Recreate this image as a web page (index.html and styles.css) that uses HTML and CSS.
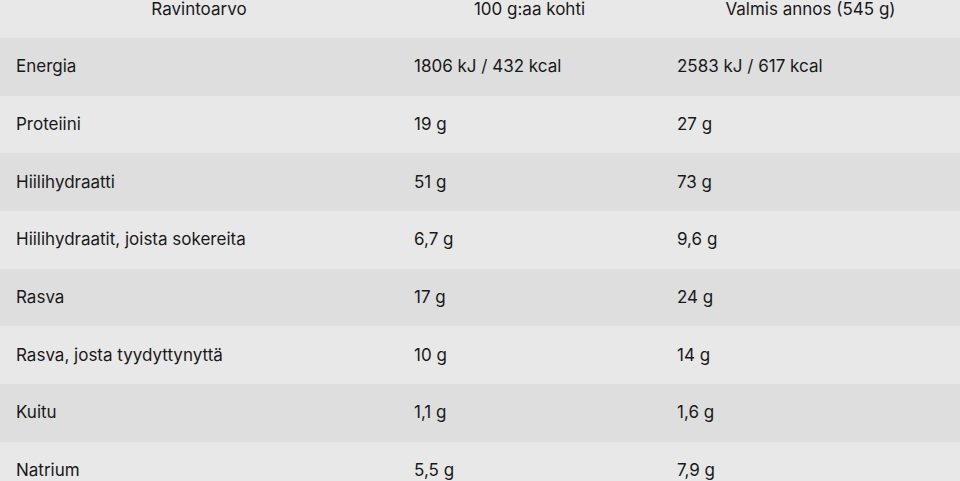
FILE: index.html
```html
<!DOCTYPE html>
<html lang="fi">
<head>
<meta charset="utf-8">
<link rel="stylesheet" href="styles.css">
</head>
<body>
<table class="nutrition">
  <colgroup>
    <col class="c1">
    <col class="c2">
    <col class="c3">
  </colgroup>
  <thead>
    <tr class="head">
      <th>Ravintoarvo</th>
      <th>100 g:aa kohti</th>
      <th>Valmis annos (545 g)</th>
    </tr>
  </thead>
  <tbody>
    <tr class="dark"><td>Energia</td><td>1806 kJ / 432 kcal</td><td>2583 kJ / 617 kcal</td></tr>
    <tr class="light"><td>Proteiini</td><td>19 g</td><td>27 g</td></tr>
    <tr class="dark"><td>Hiilihydraatti</td><td>51 g</td><td>73 g</td></tr>
    <tr class="light"><td>Hiilihydraatit, joista sokereita</td><td>6,7 g</td><td>9,6 g</td></tr>
    <tr class="dark"><td>Rasva</td><td>17 g</td><td>24 g</td></tr>
    <tr class="light"><td>Rasva, josta tyydyttynyttä</td><td>10 g</td><td>14 g</td></tr>
    <tr class="dark"><td>Kuitu</td><td>1,1 g</td><td>1,6 g</td></tr>
    <tr class="light"><td>Natrium</td><td>5,5 g</td><td>7,9 g</td></tr>
  </tbody>
</table>
</body>
</html>
```
FILE: styles.css
```css
html, body {
  margin: 0;
  padding: 0;
  background: #e8e8e8;
  overflow: hidden;
}
body {
  font-family: Inter, "Liberation Sans", Arial, sans-serif;
  color: #191919;
  font-size: 17px;
}
.nutrition {
  width: 960px;
  border-collapse: collapse;
  table-layout: fixed;
}
.c1 { width: 398px; }
.c2 { width: 263px; }
.c3 { width: 299px; }
.head th {
  height: 38px;
  padding: 0;
  vertical-align: top;
  line-height: 19px;
  font-weight: normal;
  text-align: center;
}
td {
  height: 57.7px;
  padding: 0 0 1px 16px;
  line-height: 20px;
  vertical-align: middle;
  box-sizing: border-box;
}
.dark { background: #dedede; }
.light { background: #e8e8e8; }
```
